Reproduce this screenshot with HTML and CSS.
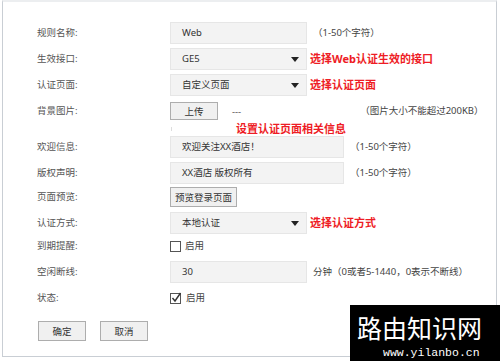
FILE: index.html
```html
<!DOCTYPE html>
<html>
  <head>
    <title>Web认证</title>
    <meta name="viewport" content="width=device-width, initial-scale=1.0" />
    <link rel="stylesheet" href="styles.css">
  </head>
  <body>
    <div class="frame">
      <div class="form">
        <div class="row">
          <span class="label">规则名称:</span>
          <span class="field">Web</span>
          <span class="hint">（1-50个字符）</span>
        </div>
        <div class="row">
          <span class="label">生效接口:</span>
          <span class="field select">GE5<i class="arrow"></i></span>
          <span class="note">选择Web认证生效的接口</span>
        </div>
        <div class="row">
          <span class="label">认证页面:</span>
          <span class="field select">自定义页面<i class="arrow"></i></span>
          <span class="note">选择认证页面</span>
        </div>
        <div class="row flush">
          <span class="label">背景图片:</span>
          <span class="btn upload">上传</span>
          <span class="dash">---</span>
          <span class="hint size">（图片大小不能超过200KB）</span>
        </div>
        <div class="caption">
          <span class="tick"></span>
          <span class="note">设置认证页面相关信息</span>
        </div>
        <div class="row">
          <span class="label">欢迎信息:</span>
          <span class="field wide">欢迎关注XX酒店！</span>
          <span class="hint">（1-50个字符）</span>
        </div>
        <div class="row tight">
          <span class="label">版权声明:</span>
          <span class="field wide">XX酒店 版权所有</span>
          <span class="hint">（1-50个字符）</span>
        </div>
        <div class="row">
          <span class="label">页面预览:</span>
          <span class="btn preview">预览登录页面</span>
        </div>
        <div class="row tight">
          <span class="label">认证方式:</span>
          <span class="field select">本地认证<i class="arrow"></i></span>
          <span class="note">选择认证方式</span>
        </div>
        <div class="row check-row">
          <span class="label">到期提醒:</span>
          <span class="box"></span>
          <span class="opt">启用</span>
        </div>
        <div class="row">
          <span class="label">空闲断线:</span>
          <span class="field">30</span>
          <span class="hint">分钟（0或者5-1440，0表示不断线）</span>
        </div>
        <div class="row last">
          <span class="label">状态:</span>
          <svg class="box checked" width="12" height="12" viewBox="0 0 12 12">
            <rect x="0.5" y="1.5" width="10" height="10" fill="#fff" stroke="#555" />
            <path d="M2.5 6 L5 9 L10.5 1" fill="none" stroke="#333" stroke-width="1.4" />
          </svg>
          <span class="opt">启用</span>
        </div>
        <div class="actions">
          <span class="btn action">确定</span>
          <span class="btn action">取消</span>
        </div>
      </div>
    </div>

    <div class="watermark">
      <div class="wm-title">路由知识网</div>
      <div class="wm-url">www.yilanbo.cn</div>
    </div>
  </body>
</html>
```

FILE: styles.css
```css
body {
  margin: 0;
  font-family: "Noto Sans", "Noto Sans CJK SC", sans-serif;
  font-size: 9.5px;
  color: #333;
  background: #fff;
}

.frame {
  margin-left: 2px;
  width: 493px;
  height: 354px;
  border: 1px solid #c9ced4;
  border-top: 2px solid #eceef0;
}

.form {
  padding: 20px 0 0 34px;
}

.row {
  display: flex;
  align-items: center;
  height: 22px;
  margin-bottom: 4px;
}
.row.flush {
  margin-bottom: 0;
}
.row.tight {
  margin-bottom: 2px;
}
.row.check-row {
  height: 20px;
  margin-top: 2px;
  margin-bottom: 5px;
}
.row.last {
  margin-bottom: 12px;
}

.label {
  width: 133px;
  flex: none;
  color: #555;
  line-height: 12px;
}

.field {
  position: relative;
  box-sizing: border-box;
  width: 137px;
  height: 22px;
  padding-left: 11px;
  line-height: 20px;
  background: #f3f3f3;
  border: 1px solid #e6e6e6;
  color: #333;
}
.field.wide {
  width: 174px;
}
.arrow {
  position: absolute;
  right: 7px;
  top: 8px;
  width: 0;
  height: 0;
  border-left: 4px solid transparent;
  border-right: 4px solid transparent;
  border-top: 5px solid #222;
}

.hint {
  margin-left: 6px;
  color: #444;
  line-height: 12px;
}
.hint.size {
  margin-left: 119px;
}

.note {
  margin-left: 3px;
  color: #ee1c25;
  font-weight: bold;
  font-size: 11px;
  line-height: 14px;
}

.btn {
  box-sizing: border-box;
  display: inline-flex;
  align-items: center;
  justify-content: center;
  background: #f0f0f0;
  border: 1px solid #adadad;
  color: #333;
}
.btn.upload {
  width: 48px;
  height: 18px;
}
.btn.preview {
  width: 67px;
  height: 20px;
}
.btn.action {
  width: 48px;
  height: 20px;
}

.dash {
  margin-left: 14px;
  color: #555;
}

.caption {
  display: flex;
  align-items: center;
  height: 14px;
  padding-left: 134px;
}
.caption .note {
  margin-left: 64px;
}
.tick {
  width: 1px;
  height: 4px;
  background: #ddd;
}

.box {
  box-sizing: border-box;
  width: 11px;
  height: 11px;
  border: 1px solid #555;
  background: #fff;
}
.box.checked {
  border: none;
  width: 12px;
  height: 12px;
}
.opt {
  margin-left: 4px;
  color: #444;
  line-height: 12px;
}

.actions {
  display: flex;
  gap: 14px;
  padding-left: 1px;
}

.watermark {
  position: absolute;
  left: 350px;
  top: 305px;
  width: 150px;
  height: 56px;
  overflow: hidden;
  background: #000;
  color: #fff;
}
.wm-title {
  padding: 10px 0 0 7px;
  font-size: 25px;
  line-height: 26px;
}
.wm-url {
  margin-top: 5px;
  padding-left: 33px;
  font-family: "Liberation Mono", monospace;
  font-size: 11.5px;
  line-height: 13px;
}
```
